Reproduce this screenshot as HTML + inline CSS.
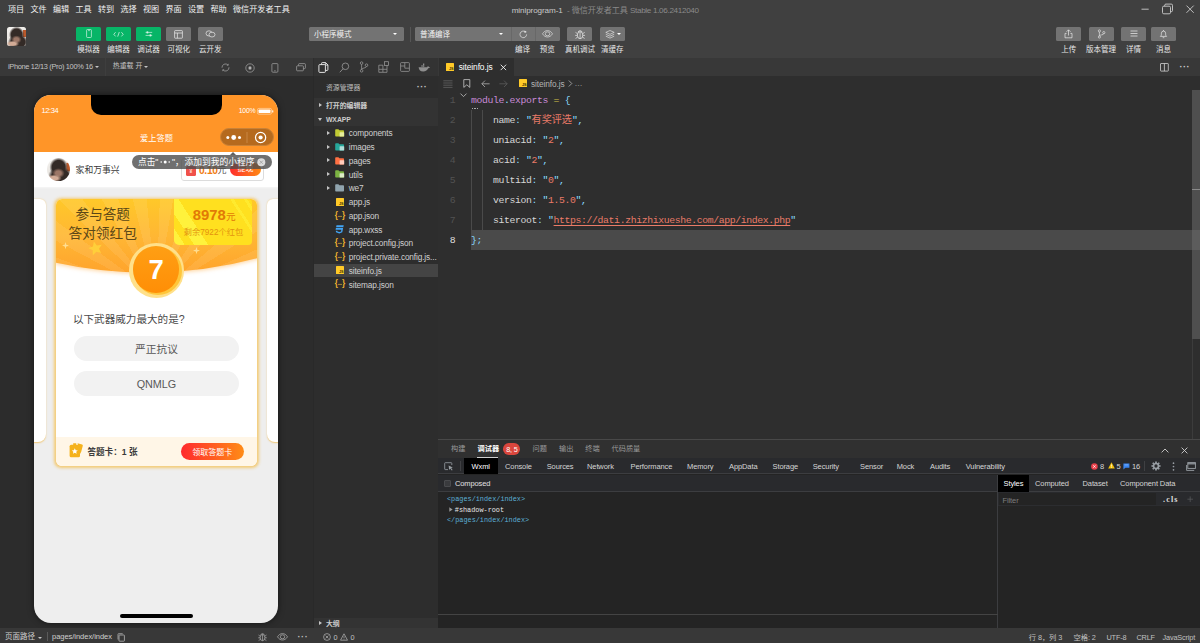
<!DOCTYPE html>
<html lang="zh-CN">
<head>
<meta charset="utf-8">
<title>miniprogram-1 - 微信开发者工具 Stable 1.06.2412040</title>
<style>
*{box-sizing:border-box;margin:0;padding:0}
html,body{width:1200px;height:643px;overflow:hidden;background:#2e2e2e}
body{font-family:"Liberation Sans","Noto Sans CJK SC",sans-serif;font-size:8.125px;color:#ccc;line-height:1}
#app{position:relative;width:1200px;height:643px;overflow:hidden;background:#2e2e2e}
.abs{position:absolute}
.t{position:absolute;white-space:nowrap;line-height:1}
svg{position:absolute;overflow:visible}
/* ---------- top ---------- */
#top{position:absolute;left:0;top:0;width:1200px;height:57.5px;background:#404040}
#menu span{position:absolute;top:6px;font-size:8.125px;color:#f0f0f0;white-space:nowrap}
.tb{position:absolute;top:27px;height:13.75px;width:25px;border-radius:1.5px;background:#737373}
.tb.g{background:#07b567}
.tl{position:absolute;top:45.6px;font-size:7.5px;color:#e8e8e8;white-space:nowrap;transform:translateX(-50%)}
.sel{position:absolute;top:27px;height:13.75px;background:#737373;border-radius:1.5px;color:#f2f2f2;font-size:7.5px;line-height:15.6px;padding-left:5px;white-space:nowrap}
.caret{position:absolute;width:0;height:0;border-left:2.2px solid transparent;border-right:2.2px solid transparent;border-top:2.9px solid #fff}
.ava{position:absolute;left:0;top:0;width:19px;height:19px;background:
radial-gradient(ellipse 6.6px 3.1px at 5.6px 16.8px,#d2ab96 50%,rgba(210,171,150,0) 100%),
radial-gradient(ellipse 5.2px 4.2px at 9.4px 12.6px,#9c7767 45%,rgba(156,119,103,0) 100%),
radial-gradient(ellipse 7.6px 8px at 9.6px 7.6px,#332a26 70%,rgba(51,42,38,0) 100%),
radial-gradient(ellipse 10px 8px at 11px 15px,#332a26 70%,rgba(51,42,38,0) 100%),
linear-gradient(#b9592c,#b9592c) 15.5px 3.5px/3.5px 7px no-repeat,
linear-gradient(160deg,#f5f3f0,#ddd8d2)}
.sel .caret,.tb .caret{border-left-width:2px;border-right-width:2px;border-top-width:2.6px}
.tb svg,.sel svg{opacity:.84}
/* ---------- simulator ---------- */
#simbar{position:absolute;left:0;top:57.5px;width:313px;height:18.75px;background:#383838}
#sim{position:absolute;left:0;top:76.25px;width:313px;height:551.5px;background:#2c2c2c;overflow:hidden}
#simfoot{position:absolute;left:0;top:627.75px;width:313px;height:15.25px;background:#383838}
#phone{position:absolute;left:34.4px;top:18.5px;width:243.75px;height:528.3px;border-radius:17px;background:#eee;overflow:hidden;box-shadow:0 0 6px rgba(0,0,0,.55)}
/* ---------- side ---------- */
#act{position:absolute;left:313.5px;top:57.5px;width:124.5px;height:18.75px;background:#333}
#side{position:absolute;left:313px;top:76.25px;width:125.5px;height:551.5px;background:#2d2d2d;border-left:.8px solid #292929;border-right:.8px solid #292929;padding-left:0}
#side>*{margin-left:-.3px}
.row{position:absolute;left:0;width:124.5px;height:13.75px}
.row .n{position:absolute;left:35px;top:3.3px;font-size:8.3px;color:#d0d0d0;white-space:nowrap;letter-spacing:-.14px}
.arr{position:absolute;width:0;height:0;border-top:2.4px solid transparent;border-bottom:2.4px solid transparent;border-left:3.2px solid #c5c5c5}
.arrd{position:absolute;width:0;height:0;border-left:2.4px solid transparent;border-right:2.4px solid transparent;border-top:3.2px solid #c5c5c5}
/* ---------- editor ---------- */
#tabs{position:absolute;left:438px;top:57.5px;width:762px;height:18.75px;background:#383838}
#ed{position:absolute;left:438px;top:76.25px;width:762px;height:363px;background:#2e2e2e;overflow:hidden}
.ln{position:absolute;left:0;width:17.6px;text-align:right;font-family:"Liberation Mono",monospace;font-size:9.8px;color:#505050;line-height:22.4px;height:20px}
.cl{position:absolute;left:33px;font-family:"Liberation Mono","Noto Sans CJK SC",monospace;font-size:9.8px;letter-spacing:-.375px;line-height:22.4px;height:20px;white-space:pre;color:#d6d6d6}
.p{color:#89ddff}.s{color:#ea7b68}.m{color:#c78ad6}.y{color:#d1c14a}
/* ---------- debugger ---------- */
#dbg{position:absolute;left:438px;top:439.25px;width:762px;height:188.5px;background:#242424;border-top:1px solid #484848}
#status{position:absolute;left:313px;top:627.75px;width:887px;height:15.25px;background:#383838}
</style>
</head>
<body>
<div id="app">

<!-- ================= TOP BAR ================= -->
<div id="top">
  <div id="menu">
    <span style="left:8px">项目</span><span style="left:30.5px">文件</span><span style="left:53px">编辑</span><span style="left:75.5px">工具</span><span style="left:98px">转到</span><span style="left:120.5px">选择</span><span style="left:143px">视图</span><span style="left:165.5px">界面</span><span style="left:188px">设置</span><span style="left:210.5px">帮助</span><span style="left:233px">微信开发者工具</span>
  </div>
  <!--TOP-BEGIN-->
  <!-- avatar -->
  <div class="abs" style="left:7.400px;top:26.800px;width:19px;height:19px;border-radius:2.500px;overflow:hidden"><div class="ava"></div></div>
  <!-- left buttons -->
  <div class="tb g" style="left:76px"><svg style="left:8.5px;top:2.4px" width="8" height="9" viewBox="0 0 8 9"><rect x="1.6" y=".5" width="4.8" height="8" rx=".8" fill="none" stroke="#fff" stroke-width=".7"/><path d="M3 1.6h2" stroke="#fff" stroke-width=".6"/></svg></div>
  <div class="tb g" style="left:106px"><svg style="left:7px;top:3.6px" width="11" height="7" viewBox="0 0 11 7"><path d="M2.6 1.2L.8 3.3l1.8 2.1M8.4 1.2l1.8 2.1-1.8 2.1M6.3 1L4.7 5.6" fill="none" stroke="#fff" stroke-width=".75"/></svg></div>
  <div class="tb g" style="left:136px"><svg style="left:8.5px;top:3.2px" width="8" height="8" viewBox="0 0 8 8"><path d="M.6 2.4h6.6M.6 5.4h6.6" stroke="#fff" stroke-width=".7"/><rect x="1.6" y="1.4" width="1.6" height="2" fill="#fff"/><rect x="4.6" y="4.4" width="1.6" height="2" fill="#fff"/></svg></div>
  <div class="tb" style="left:166.3px"><svg style="left:8px;top:2.6px" width="9" height="9" viewBox="0 0 9 9"><rect x=".6" y=".6" width="7.8" height="7.6" rx=".6" fill="none" stroke="#fff" stroke-width=".75"/><path d="M.6 3h7.8M3.4 3v5.2" stroke="#fff" stroke-width=".75"/></svg></div>
  <div class="tb" style="left:197.8px"><svg style="left:7px;top:3px" width="11" height="8" viewBox="0 0 11 8"><ellipse cx="4" cy="3.4" rx="3" ry="2.6" fill="none" stroke="#fff" stroke-width=".7"/><ellipse cx="7" cy="4.6" rx="3" ry="2.4" fill="#737373" stroke="#fff" stroke-width=".7"/></svg></div>
  <div class="tl" style="left:88.5px">模拟器</div><div class="tl" style="left:118.5px">编辑器</div><div class="tl" style="left:148.5px">调试器</div><div class="tl" style="left:178.8px">可视化</div><div class="tl" style="left:210.3px">云开发</div>
  <!-- selects -->
  <div class="sel" style="left:309px;width:95px">小程序模式<div class="caret" style="left:84.3px;top:6.2px"></div></div>
  <div class="abs" style="left:409.5px;top:26.5px;width:.7px;height:15px;background:#565656"></div>
  <div class="sel" style="left:415px;width:145px">普通编译<div class="caret" style="left:84.2px;top:6.2px"></div>
    <div class="abs" style="left:95.6px;top:0;width:.7px;height:13.75px;background:#686868"></div>
    <div class="abs" style="left:120.3px;top:0;width:.7px;height:13.75px;background:#686868"></div>
    <svg style="left:103.5px;top:2.6px" width="9" height="9" viewBox="0 0 9 9"><path d="M7.6 4.4A3.3 3.3 0 1 1 6.2 1.7" fill="none" stroke="#fff" stroke-width=".7"/><path d="M5.6.4l2.2 1.5-2.3 1z" fill="#fff"/></svg>
    <svg style="left:127px;top:3.2px" width="11" height="8" viewBox="0 0 11 8"><path d="M.5 3.8C2 1.4 3.7.6 5.5.6s3.5.8 5 3.2c-1.5 2.400-3.200 3.200-5 3.200S2 6.200.5 3.800z" fill="none" stroke="#fff" stroke-width=".65"/><ellipse cx="5.500" cy="3.800" rx="2.300" ry="2" fill="none" stroke="#fff" stroke-width=".65"/></svg>
  </div>
  <div class="tb" style="left:567.3px"><svg style="left:6.400px;top:1.500px" width="12.200" height="11" viewBox="0 0 11 10"><ellipse cx="5.500" cy="5.600" rx="2.500" ry="3.200" fill="none" stroke="#fff" stroke-width=".7"/><path d="M5.500 2.600v6.200M3.700 2.800A1.900 1.900 0 0 1 7.300 2.800M3 4.200L1.300 3M8 4.200L9.700 3M3 5.800H1M8 5.800h2M3.200 7.400L1.400 8.600M7.800 7.400l1.800 1.200" fill="none" stroke="#fff" stroke-width=".65"/></svg></div>
  <div class="tb" style="left:600px"><svg style="left:4.500px;top:2.800px" width="10" height="9" viewBox="0 0 10 9"><path d="M5 .5l4.200 1.900L5 4.300.8 2.400zM.8 4.300L5 6.200l4.200-1.900M.8 6.200L5 8.100l4.200-1.900" fill="none" stroke="#fff" stroke-width=".65"/></svg><div class="caret" style="left:17.400px;top:6.200px"></div></div>
  <div class="tl" style="left:522.600px">编译</div><div class="tl" style="left:547.300px">预览</div><div class="tl" style="left:580px">真机调试</div><div class="tl" style="left:612.200px">清缓存</div>
  <!-- title -->
  <div class="t" style="left:511.700px;top:6.600px;font-size:8.125px;color:#c8c8c8;letter-spacing:-.1px">miniprogram-1&nbsp; <span style="color:#8a8a8a">- 微信开发者工具 <span style="letter-spacing:-.32px">Stable 1.06.2412040</span></span></div>
  <!-- window controls -->
  <svg style="left:1141px;top:3.100px" width="56" height="12" viewBox="0 0 56 12"><path d="M.5 6.200h7.200" stroke="#d4d4d4" stroke-width=".85"/><rect x="21.500" y="3.200" width="8" height="7.600" rx="1.300" fill="none" stroke="#d4d4d4" stroke-width=".85"/><path d="M23.700 3.200V2.300a1.200 1.200 0 0 1 1.200-1.200h5.400a1.200 1.200 0 0 1 1.200 1.200v5.200a1.200 1.200 0 0 1-1.200 1.200h-.8" fill="none" stroke="#d4d4d4" stroke-width=".85"/><path d="M45.500 2.600l7.200 7.200M52.700 2.600l-7.200 7.200" stroke="#d4d4d4" stroke-width=".85"/></svg>
  <!-- right buttons -->
  <div class="tb" style="left:1056px"><svg style="left:8px;top:2.200px" width="9" height="10" viewBox="0 0 9 10"><path d="M4.500 6.500V1M2.500 2.800L4.500.8l2 2M2.600 4.400H1v4.400h7V4.400H6.400" fill="none" stroke="#fff" stroke-width=".7"/></svg></div>
  <div class="tb" style="left:1088.500px"><svg style="left:8px;top:2.200px" width="9" height="10" viewBox="0 0 9 10"><circle cx="2.400" cy="1.900" r="1.100" fill="none" stroke="#fff" stroke-width=".65"/><circle cx="2.400" cy="8" r="1.100" fill="none" stroke="#fff" stroke-width=".65"/><circle cx="6.800" cy="3.600" r="1.100" fill="none" stroke="#fff" stroke-width=".65"/><path d="M2.400 3v3.900M6.800 4.700c0 1.400-4.400 1-4.400 2.200" fill="none" stroke="#fff" stroke-width=".65"/></svg></div>
  <div class="tb" style="left:1121px"><svg style="left:8.500px;top:3.400px" width="8" height="7" viewBox="0 0 8 7"><path d="M.5 1h7M.5 3.500h7M.5 6h7" stroke="#fff" stroke-width=".75"/></svg></div>
  <div class="tb" style="left:1151.200px"><svg style="left:8px;top:2.200px" width="9" height="10" viewBox="0 0 9 10"><path d="M1.400 7.400c1-.8 1-1.600 1-3.200a2.100 2.100 0 0 1 4.200 0c0 1.600 0 2.400 1 3.200zM3.700 8.700h1.600M4.500 1.900V1" fill="none" stroke="#fff" stroke-width=".7"/></svg></div>
  <div class="tl" style="left:1068.800px">上传</div><div class="tl" style="left:1101px">版本管理</div><div class="tl" style="left:1133.500px">详情</div><div class="tl" style="left:1163.500px">消息</div>
<!--TOP-END-->
</div>

<!-- ================= SIMULATOR ================= -->
<div id="simbar"><!--SIMBAR-BEGIN-->
  <div class="t" style="left:8px;top:5.600px;font-size:7.400px;color:#c4c4c4;letter-spacing:-.33px">iPhone 12/13 (Pro) 100% 16</div>
  <div class="caret" style="left:94.500px;top:8.600px;border-top-color:#c4c4c4"></div>
  <div class="abs" style="left:104.500px;top:0;width:.7px;height:18.750px;background:#3e3e3e"></div>
  <div class="t" style="left:112.800px;top:5.800px;font-size:6.900px;color:#c4c4c4">热重载 开</div>
  <div class="caret" style="left:143.500px;top:8.600px;border-top-color:#c4c4c4"></div>
  <svg style="left:220.600px;top:5.500px" width="9" height="9" viewBox="0 0 9 9"><path d="M1 4.700A3.500 3.500 0 0 1 7 2M8 4.300A3.500 3.500 0 0 1 2 7" fill="none" stroke="#a6a6a6" stroke-width=".7"/><path d="M7.300.8v1.500H5.800M1.700 8.200V6.700h1.500" fill="none" stroke="#a6a6a6" stroke-width=".6"/></svg>
  <svg style="left:245.400px;top:5.400px" width="10" height="10" viewBox="0 0 10 10"><circle cx="5" cy="5" r="4.200" fill="none" stroke="#a6a6a6" stroke-width=".7"/><rect x="3.600" y="3.600" width="2.800" height="2.800" rx=".4" fill="#b0b0b0"/></svg>
  <svg style="left:271.400px;top:5.200px" width="8" height="10" viewBox="0 0 8 10"><rect x=".9" y=".6" width="6" height="8.600" rx=".9" fill="none" stroke="#a6a6a6" stroke-width=".7"/><path d="M3 7.800h1.800" stroke="#a6a6a6" stroke-width=".6"/></svg>
  <svg style="left:295.500px;top:5.600px" width="10" height="9" viewBox="0 0 10 9"><rect x="2.600" y=".6" width="6.800" height="5" rx=".8" fill="none" stroke="#a6a6a6" stroke-width=".7"/><rect x=".6" y="2.800" width="6.800" height="5" rx=".8" fill="#383838" stroke="#a6a6a6" stroke-width=".7"/></svg>
<!--SIMBAR-END--></div>
<div id="sim">
  <div id="phone"><!--PHONE-BEGIN-->
    <!-- header -->
    <div class="abs" style="left:0;top:0;width:243.750px;height:57.200px;background:#ff9528"></div>
    <div class="abs" style="left:56.200px;top:-10px;width:131.300px;height:30.250px;border-radius:0 0 10px 10px;background:#000"></div>
    <div class="t" style="left:7.100px;top:11.900px;font-size:7.500px;color:#fff;letter-spacing:-.4px">12:34</div>
    <div class="t" style="left:204.300px;top:13.300px;font-size:6.900px;color:#fff;letter-spacing:-.2px">100%</div>
    <svg style="left:223px;top:13px" width="17" height="7" viewBox="0 0 17 7"><rect x=".4" y=".4" width="14.200" height="5.800" rx="1.500" fill="none" stroke="#ffd9ad" stroke-width=".7"/><rect x="1.500" y="1.500" width="12" height="3.600" rx=".8" fill="#fff"/><rect x="15.200" y="2.200" width="1.100" height="2.200" rx=".5" fill="#fff"/></svg>
    <div class="t" style="left:105.700px;top:40.600px;font-size:8.200px;color:#fff">爱上答题</div>
    <!-- capsule -->
    <div class="abs" style="left:185.400px;top:32.750px;width:54px;height:18.800px;border-radius:9.400px;background:#b56a1e;border:.6px solid #c98238"></div>
    <svg style="left:185.400px;top:32.750px" width="54" height="19" viewBox="0 0 54 19"><circle cx="7.800" cy="9.500" r="1.500" fill="#fff"/><circle cx="13.700" cy="9.500" r="2.400" fill="#fff"/><circle cx="19.500" cy="9.500" r="1.500" fill="#fff"/><path d="M27 4v11" stroke="#d69a5c" stroke-width=".6"/><circle cx="40.600" cy="9.500" r="5.100" fill="none" stroke="#fff" stroke-width="1.200"/><circle cx="40.600" cy="9.500" r="2.100" fill="#fff"/></svg>
    <!-- user row -->
    <div class="abs" style="left:0;top:57.200px;width:243.750px;height:35px;background:#fff"></div>
    <div class="abs" style="left:0;top:92.200px;width:243.750px;height:2.500px;background:linear-gradient(#f6f6f6,#eee)"></div>
    <div class="abs" style="left:12.400px;top:63.100px;width:23px;height:23px;border-radius:50%;overflow:hidden"><div class="ava" style="transform:scale(1.2105);transform-origin:0 0"></div></div>
    <div class="t" style="left:41.200px;top:71.100px;font-size:8.800px;color:#3a3a3a">家和万事兴</div>
    <!-- money box -->
    <div class="abs" style="left:146.800px;top:63.600px;width:83.300px;height:23.100px;border:.7px solid #dcdcdc;border-radius:3px;background:#fff"></div>
    <div class="abs" style="left:151.600px;top:71px;width:10.500px;height:10.500px;border-radius:1.500px;background:#f0514a"></div>
    <div class="t" style="left:155px;top:74.500px;font-size:5px;color:#ffd9d0;font-weight:bold">¥</div>
    <div class="t" style="left:164.500px;top:70.800px;font-size:10.300px;color:#f07c14;font-weight:bold;letter-spacing:-.3px">0.10</div>
    <div class="t" style="left:183px;top:71.300px;font-size:9px;color:#555">元</div>
    <div class="abs" style="left:195.600px;top:68.200px;width:31px;height:13.200px;border-radius:6.600px;background:linear-gradient(90deg,#ff2d2d,#ff8a14)"></div>
    <div class="t" style="left:203.200px;top:70.700px;font-size:8px;color:#fff">提现</div>
    <!-- tooltip -->
    <div class="abs" style="left:195.200px;top:57.600px;width:0;height:0;border-left:3px solid transparent;border-right:3px solid transparent;border-bottom:3px solid rgba(80,80,80,.9)"></div>
    <div class="abs" style="left:97.500px;top:60.250px;width:140.200px;height:13.750px;border-radius:6.900px;background:rgba(76,76,76,.8)"></div>
    <div class="t" style="left:103.700px;top:63.200px;font-size:8.600px;color:#fff">点击"</div>
    <svg style="left:124.800px;top:64.400px" width="14" height="6" viewBox="0 0 14 6"><circle cx="2.200" cy="3" r=".8" fill="#fff"/><circle cx="6.200" cy="3" r="1.500" fill="#fff"/><circle cx="10.200" cy="3" r=".8" fill="#fff"/></svg>
    <div class="t" style="left:137.500px;top:63.200px;font-size:8.600px;color:#fff">"，</div>
    <div class="t" style="left:150px;top:63.200px;font-size:8.750px;color:#fff">添加到我的小程序</div>
    <svg style="left:223px;top:63px" width="9" height="9" viewBox="0 0 9 9"><circle cx="4.300" cy="4.200" r="4" fill="#dcdcdc"/><path d="M2.700 2.600l3.200 3.200M5.900 2.600L2.700 5.800" stroke="#9a9a9a" stroke-width=".8"/></svg>
    <!-- side cards -->
    <div class="abs" style="left:-4px;top:104.650px;width:15.200px;height:242.800px;border-radius:0 6px 8px 0;background:#fff;box-shadow:0 .6px 1.500px rgba(240,190,90,.8)"></div>
    <div class="abs" style="left:232.900px;top:104.650px;width:15px;height:242.800px;border-radius:6px 0 0 8px;background:#fff;box-shadow:0 .6px 1.500px rgba(240,190,90,.8)"></div>
    <!-- main card -->
    <div id="card" class="abs" style="left:21.200px;top:104.650px;width:201.300px;height:266.600px;border-radius:6px;background:#fff;box-shadow:0 .5px 3px 1.200px rgba(243,200,110,.95);overflow:hidden">
      <div class="abs" style="left:-2px;top:-4px;width:205.300px;height:84px;filter:drop-shadow(0 1.500px 2px rgba(255,165,50,.5))"><div class="abs" style="left:0;top:0;width:205.300px;height:84px;clip-path:path('M0 0H205.300V62.300Q104 89.600 0 66.800Z');background:repeating-conic-gradient(from -94deg at 50% 118%,rgba(255,255,255,.08) 0 8deg,rgba(255,255,255,0) 8deg 16deg),linear-gradient(#ffc829 5%,#ffb634 50%,#ffa32c 95%)"></div></div>
      <!-- yellow box -->
      <div class="abs" style="left:118.800px;top:0;width:78.100px;height:45.600px;border-radius:0 4px 4px 5px;background:linear-gradient(57deg,#fff23c 0 10%,#ffe01f 10% 18.750%,#fff23c 18.750% 31.700%,#ffe01f 31.700% 79.800%,#ffea2e 79.800% 82.900%,#ffe01f 82.900% 92.200%,#ffea2e 92.200% 95.300%,#ffe01f 95.300%)"></div>
      <div class="t" style="left:137.200px;top:8.400px;font-size:14.900px;font-weight:bold;color:#e27a06;letter-spacing:-.05px">8978</div>
      <div class="t" style="left:170.300px;top:12.800px;font-size:9.600px;color:#e27a06">元</div>
      <div class="t" style="left:128.200px;top:29.700px;font-size:8.200px;color:#e3920f;letter-spacing:.02px">剩余7922个红包</div>
      <div class="t" style="left:20px;top:8.300px;font-size:13.600px;color:#5b4717">参与答题</div>
      <div class="t" style="left:12.900px;top:27.200px;font-size:13.700px;color:#5b4717">答对领红包</div>
      <!-- stars -->
      <svg style="left:6px;top:43px" width="50" height="22" viewBox="0 0 50 22"><path d="M3.500 0l.8 2.800L7 3.600l-2.700.8L3.500 7.200l-.8-2.800L0 3.600l2.700-.8z" fill="#ffe9a8" opacity=".8"/><path transform="translate(33.500 6.200) rotate(-14) scale(1.250) translate(-38 -8.500)" d="M38 3l1.600 3.600 3.900.4-2.900 2.600.8 3.800-3.400-2-3.400 2 .8-3.800-2.900-2.600 3.900-.4z" fill="#ffcf3a"/></svg>
      <svg style="left:137.200px;top:48px" width="8" height="8" viewBox="0 0 8 8"><path d="M3.500 0l.8 2.800L7 3.600l-2.700.8L3.500 7.200l-.8-2.800L0 3.600l2.700-.8z" fill="#ffe9a8" opacity=".8"/></svg>
      <!-- coin -->
      <div class="abs" style="left:73.500px;top:43.700px;width:55.300px;height:54.600px;border-radius:50%;background:#ffe08a"></div>
      <div class="abs" style="left:78px;top:47.600px;width:48px;height:48px;border-radius:50%;background:#ffc63a"></div>
      <div class="abs" style="left:77.300px;top:46.800px;width:46.600px;height:46.600px;border-radius:50%;background:linear-gradient(#ff9f14,#ff8e06)"></div>
      <div class="t" style="left:92.800px;top:57px;font-size:27.500px;font-weight:bold;color:#fff">7</div>
      <!-- question -->
      <div class="t" style="left:17.400px;top:114.200px;font-size:10.600px;color:#4a4a4a;letter-spacing:-.02px">以下武器威力最大的是?</div>
      <div class="abs" style="left:18px;top:136.600px;width:165.800px;height:25.400px;border-radius:12.700px;background:#f2f2f2"></div>
      <div class="abs" style="left:18px;top:171.600px;width:165.800px;height:25.400px;border-radius:12.700px;background:#f2f2f2"></div>
      <div class="t" style="left:18px;width:165.800px;text-align:center;top:144.200px;font-size:10.700px;color:#585858">严正抗议</div>
      <div class="t" style="left:18px;width:165.800px;text-align:center;top:179.300px;font-size:10.800px;color:#585858">QNMLG</div>
      <!-- footer -->
      <div class="abs" style="left:0;top:237.900px;width:201.300px;height:29px;background:#fff6e7"></div>
      <svg style="left:13px;top:243px" width="15" height="16" viewBox="0 0 15 16"><path d="M8.500 1.200l4.600 1.400a1 1 0 0 1 .7 1.200L11.600 12z" fill="#f5b21c"/><rect x=".6" y="2.800" width="10.400" height="12.400" rx="1.500" fill="#f5b21c"/><path d="M4.200 1.200h3v2.200h-3z" fill="#f5b21c"/><path d="M5.800 6.300l.9 1.900 2.100.2-1.600 1.400.5 2-1.900-1.100-1.900 1.100.5-2-1.600-1.400 2.100-.2z" fill="#fff"/></svg>
      <div class="t" style="left:31.800px;top:248.300px;font-size:8.600px;font-weight:bold;color:#3a3a3a">答题卡：1 张</div>
      <div class="abs" style="left:125px;top:243.500px;width:63.300px;height:17.300px;border-radius:8.700px;background:linear-gradient(90deg,#ff2a2e,#ff8c16)"></div>
      <div class="t" style="left:125px;width:63.300px;text-align:center;top:249.200px;font-size:8px;color:#fff">领取答题卡</div>
    </div>
    <!-- home bar -->
    <div class="abs" style="left:85.600px;top:519.300px;width:72.800px;height:3.800px;border-radius:2px;background:#000"></div>
<!--PHONE-END--></div>
</div>
<div id="simfoot"><!--SIMFOOT-BEGIN-->
  <div class="t" style="left:5px;top:5.400px;font-size:7.500px;color:#cfcfcf">页面路径</div>
  <div class="caret" style="left:38px;top:9px;border-top-color:#c4c4c4"></div>
  <div class="abs" style="left:47px;top:4.500px;width:.6px;height:8.500px;background:#5a5a5a"></div>
  <div class="t" style="left:52px;top:5.600px;font-size:7.500px;color:#cfcfcf;letter-spacing:-.03px">pages/index/index</div>
  <svg style="left:117px;top:5px" width="8" height="9" viewBox="0 0 8 9"><rect x="2" y="2" width="5.400" height="6.200" rx=".6" fill="none" stroke="#bdbdbd" stroke-width=".75"/><path d="M1 6.500V1.200a.5.500 0 0 1 .5-.5h4.200" fill="none" stroke="#bdbdbd" stroke-width=".7"/></svg>
  <svg style="left:256.500px;top:4px" width="11" height="10" viewBox="0 0 11 10"><ellipse cx="5.500" cy="5.600" rx="2.400" ry="3.100" fill="none" stroke="#bdbdbd" stroke-width=".65"/><path d="M5.500 2.700v6M3.800 2.800A1.800 1.800 0 0 1 7.200 2.800M3.100 4.200L1.500 3M7.900 4.200L9.500 3M3.100 5.800H1.200M7.900 5.800h1.900M3.300 7.400L1.600 8.600M7.700 7.400l1.700 1.200" fill="none" stroke="#bdbdbd" stroke-width=".6"/></svg>
  <svg style="left:277px;top:5.200px" width="11" height="8" viewBox="0 0 11 8"><path d="M.5 3.800C2 1.400 3.700.6 5.500.6s3.500.8 5 3.200c-1.500 2.400-3.200 3.200-5 3.200S2 6.200.5 3.800z" fill="none" stroke="#bdbdbd" stroke-width=".65"/><ellipse cx="5.500" cy="3.800" rx="2.200" ry="2" fill="none" stroke="#bdbdbd" stroke-width=".65"/></svg>
  <div class="t" style="left:297.500px;top:5px;font-size:9px;font-weight:bold;color:#bdbdbd;letter-spacing:.6px">···</div>
<!--SIMFOOT-END--></div>

<!-- ================= SIDE ================= -->
<div id="act"><!--ACT-BEGIN-->
  <!-- files -->
  <svg style="left:4.500px;top:4px" width="11" height="11" viewBox="0 0 11 11"><path d="M3.600 2.400V1.300a.7.700 0 0 1 .7-.7h3.300l2.300 2.300v4.800a.7.700 0 0 1-.7.700H7.600" fill="none" stroke="#fff" stroke-width=".85"/><path d="M7.400.7v2.400h2.400" fill="none" stroke="#fff" stroke-width=".7"/><rect x=".9" y="2.600" width="6.500" height="7.800" rx=".8" fill="none" stroke="#fff" stroke-width=".85"/></svg>
  <!-- search -->
  <svg style="left:25px;top:4px" width="11" height="11" viewBox="0 0 11 11"><circle cx="6.400" cy="4.300" r="3.300" fill="none" stroke="#9a9a9a" stroke-width=".8"/><path d="M4.100 6.700L.8 10.300" stroke="#9a9a9a" stroke-width=".8"/></svg>
  <!-- git -->
  <svg style="left:45px;top:3.500px" width="10" height="12" viewBox="0 0 10 12"><circle cx="2.600" cy="2.100" r="1.300" fill="none" stroke="#9a9a9a" stroke-width=".75"/><circle cx="2.600" cy="9.800" r="1.300" fill="none" stroke="#9a9a9a" stroke-width=".75"/><circle cx="7.500" cy="4.200" r="1.300" fill="none" stroke="#9a9a9a" stroke-width=".75"/><path d="M2.600 3.400v5.100M7.500 5.500c0 1.800-4.900 1.200-4.900 3" fill="none" stroke="#9a9a9a" stroke-width=".75"/></svg>
  <!-- extensions -->
  <svg style="left:64.500px;top:3.500px" width="12" height="12" viewBox="0 0 12 12"><path d="M.8 4.200h4.100v4.100H.8zM4.900 8.300H9v-4M.8 8.300v3h4.100v-3M4.900 11.300H9v-3" fill="none" stroke="#9a9a9a" stroke-width=".75"/><rect x="6.600" y=".7" width="3.800" height="3.800" fill="none" stroke="#9a9a9a" stroke-width=".75"/></svg>
  <!-- layout -->
  <svg style="left:86px;top:4.500px" width="10" height="10" viewBox="0 0 10 10"><rect x=".6" y=".6" width="8.800" height="8.800" rx=".8" fill="none" stroke="#9a9a9a" stroke-width=".75"/><path d="M.6 4h4.200V.8M4.800 4v2.200h4.600" fill="none" stroke="#9a9a9a" stroke-width=".75"/></svg>
  <!-- docker -->
  <svg style="left:104px;top:5px" width="12" height="9" viewBox="0 0 12 9"><path d="M.6 4.200h8.200c.5-.1.900-.5 1-1.300.7.300 1 .7 1.100 1.200.4-.1.800 0 1 .2-.3.700-.9 1-1.700 1C9.500 7.300 7.800 8.400 5.200 8.400 2.400 8.400.9 7 .6 4.200z" fill="#8e8e8e"/><path d="M3.400 2.200h1.300v1.500H3.400zM5 2.200h1.300v1.500H5zM5 .6h1.300v1.400H5z" fill="#8e8e8e"/></svg>
<!--ACT-END--></div>
<div id="side"><!--SIDE-BEGIN-->
  <div class="t" style="left:12.200px;top:8.500px;font-size:6.900px;color:#bbb;letter-spacing:.02px">资源管理器</div>
  <div class="t" style="left:103px;top:6.800px;font-size:9px;font-weight:bold;color:#c5c5c5;letter-spacing:.5px">···</div>
  <div class="row" style="top:22.00px;background:#333"><div class="arr" style="left:5.200px;top:4.800px"></div><div class="t" style="left:12.200px;top:4.500px;font-size:6.900px;font-weight:bold;color:#ccc">打开的编辑器</div></div>
  <div class="row" style="top:35.75px;background:#333"><div class="arrd" style="left:4.600px;top:5.600px"></div><div class="t" style="left:12.200px;top:4.500px;font-size:6.900px;font-weight:bold;color:#ccc;letter-spacing:-.05px">WXAPP</div></div>
  <div class="row" style="top:49.75px"><div class="arr" style="left:13.500px;top:4.800px"></div><svg style="left:21.600px;top:3px" width="10" height="8" viewBox="0 0 10 8"><path d="M.2 1A.8.800 0 0 1 1 .2h2.400l1 1h3.800a.8.800 0 0 1 .8.800v4.800a.8.800 0 0 1-.8.800H1a.8.800 0 0 1-.8-.8z" fill="#c0ca33"/><rect x="4.600" y="3.200" width="4.600" height="4.400" rx=".6" fill="#e6ee9c"/></svg><div class="n">components</div></div>
  <div class="row" style="top:63.50px"><div class="arr" style="left:13.500px;top:4.800px"></div><svg style="left:21.600px;top:3px" width="10" height="8" viewBox="0 0 10 8"><path d="M.2 1A.8.800 0 0 1 1 .2h2.400l1 1h3.800a.8.800 0 0 1 .8.800v4.800a.8.800 0 0 1-.8.800H1a.8.800 0 0 1-.8-.8z" fill="#26a69a"/><rect x="4.600" y="3.200" width="4.600" height="4.400" rx=".6" fill="#b2dfdb"/></svg><div class="n">images</div></div>
  <div class="row" style="top:77.25px"><div class="arr" style="left:13.500px;top:4.800px"></div><svg style="left:21.600px;top:3px" width="10" height="8" viewBox="0 0 10 8"><path d="M.2 1A.8.800 0 0 1 1 .2h2.400l1 1h3.800a.8.800 0 0 1 .8.800v4.800a.8.800 0 0 1-.8.800H1a.8.800 0 0 1-.8-.8z" fill="#ff7043"/><rect x="4.600" y="3.200" width="4.600" height="4.400" rx=".6" fill="#ffccbc"/></svg><div class="n">pages</div></div>
  <div class="row" style="top:91.00px"><div class="arr" style="left:13.500px;top:4.800px"></div><svg style="left:21.600px;top:3px" width="10" height="8" viewBox="0 0 10 8"><path d="M.2 1A.8.800 0 0 1 1 .2h2.400l1 1h3.800a.8.800 0 0 1 .8.800v4.800a.8.800 0 0 1-.8.800H1a.8.800 0 0 1-.8-.8z" fill="#7cb342"/><rect x="4.600" y="3.200" width="4.600" height="4.400" rx=".6" fill="#dcedc8"/></svg><div class="n">utils</div></div>
  <div class="row" style="top:104.75px"><div class="arr" style="left:13.500px;top:4.800px"></div><svg style="left:21.600px;top:3px" width="10" height="8" viewBox="0 0 10 8"><path d="M.2 1A.8.800 0 0 1 1 .2h2.400l1 1h3.800a.8.800 0 0 1 .8.800v4.800a.8.800 0 0 1-.8.800H1a.8.800 0 0 1-.8-.8z" fill="#90a4ae"/></svg><div class="n">we7</div></div>
  <div class="row" style="top:118.50px"><svg style="left:22.600px;top:2.800px" width="8" height="8" viewBox="0 0 8 8"><rect width="8" height="8" rx=".5" fill="#ffca28"/><text x="3" y="7" font-size="3.800" font-weight="bold" font-family="Liberation Sans,sans-serif" fill="#3a3000">JS</text></svg><div class="n">app.js</div></div>
  <div class="row" style="top:132.25px"><svg style="left:21.400px;top:1.200px" width="10" height="10" viewBox="0 0 10 10"><text x="-.2" y="7.800" font-size="8.200" font-weight="bold" font-family="Liberation Sans,sans-serif" fill="#f2b530">{</text><text x="6.900" y="7.800" font-size="8.200" font-weight="bold" font-family="Liberation Sans,sans-serif" fill="#f2b530">}</text><circle cx="4" cy="6.400" r=".65" fill="#f2b530"/><circle cx="6" cy="6.400" r=".65" fill="#f2b530"/></svg><div class="n">app.json</div></div>
  <div class="row" style="top:146.00px"><svg style="left:21.600px;top:2.500px" width="9" height="9" viewBox="0 0 9 9"><path d="M1.500.3h7.200l-.4 1.900H1.100zM.9 3h7.200L7.300 7.300 4.300 8.400 1 7.300.8 5.800h1.600l.1.600 1.800.6 1.800-.6.200-1.600H.6z" fill="#42a5f5"/></svg><div class="n">app.wxss</div></div>
  <div class="row" style="top:159.75px"><svg style="left:21.400px;top:1.200px" width="10" height="10" viewBox="0 0 10 10"><text x="-.2" y="7.800" font-size="8.200" font-weight="bold" font-family="Liberation Sans,sans-serif" fill="#f2b530">{</text><text x="6.900" y="7.800" font-size="8.200" font-weight="bold" font-family="Liberation Sans,sans-serif" fill="#f2b530">}</text><circle cx="4" cy="6.400" r=".65" fill="#f2b530"/><circle cx="6" cy="6.400" r=".65" fill="#f2b530"/></svg><div class="n">project.config.json</div></div>
  <div class="row" style="top:173.50px"><svg style="left:21.400px;top:1.200px" width="10" height="10" viewBox="0 0 10 10"><text x="-.2" y="7.800" font-size="8.200" font-weight="bold" font-family="Liberation Sans,sans-serif" fill="#f2b530">{</text><text x="6.900" y="7.800" font-size="8.200" font-weight="bold" font-family="Liberation Sans,sans-serif" fill="#f2b530">}</text><circle cx="4" cy="6.400" r=".65" fill="#f2b530"/><circle cx="6" cy="6.400" r=".65" fill="#f2b530"/></svg><div class="n">project.private.config.js...</div></div>
  <div class="row" style="top:187.25px;background:#444"><svg style="left:22.600px;top:2.800px" width="8" height="8" viewBox="0 0 8 8"><rect width="8" height="8" rx=".5" fill="#ffca28"/><text x="3" y="7" font-size="3.800" font-weight="bold" font-family="Liberation Sans,sans-serif" fill="#3a3000">JS</text></svg><div class="n">siteinfo.js</div></div>
  <div class="row" style="top:201.00px"><svg style="left:21.400px;top:1.200px" width="10" height="10" viewBox="0 0 10 10"><text x="-.2" y="7.800" font-size="8.200" font-weight="bold" font-family="Liberation Sans,sans-serif" fill="#f2b530">{</text><text x="6.900" y="7.800" font-size="8.200" font-weight="bold" font-family="Liberation Sans,sans-serif" fill="#f2b530">}</text><circle cx="4" cy="6.400" r=".65" fill="#f2b530"/><circle cx="6" cy="6.400" r=".65" fill="#f2b530"/></svg><div class="n">sitemap.json</div></div>
  <div class="abs" style="left:0;top:541.500px;width:124.500px;height:10px;background:#333"></div>
  <div class="arr" style="left:5.200px;top:545px"></div><div class="t" style="left:12.200px;top:544.800px;font-size:6.900px;font-weight:bold;color:#ccc">大纲</div>
<!--SIDE-END--></div>

<!-- ================= EDITOR ================= -->
<div id="tabs"><!--TABS-BEGIN-->
  <div class="abs" style="left:1px;top:0;width:75px;height:18.750px;background:#2e2e2e"></div>
  <svg style="left:8px;top:5.800px" width="8" height="8" viewBox="0 0 8 8"><rect width="8" height="8" rx=".5" fill="#ffca28"/><text x="3" y="7" font-size="3.800" font-weight="bold" font-family="Liberation Sans,sans-serif" fill="#3a3000">JS</text></svg>
  <div class="t" style="left:20.700px;top:5.900px;font-size:8.400px;color:#fff;letter-spacing:-.1px">siteinfo.js</div>
  <svg style="left:62px;top:6.600px" width="7" height="7" viewBox="0 0 7 7"><path d="M.7.700l5.400 5.400M6.100.7L.7 6.100" stroke="#fff" stroke-width=".85"/></svg>
  <svg style="left:722px;top:5.400px" width="9" height="9" viewBox="0 0 9 9"><rect x=".5" y=".5" width="7.800" height="7.600" rx=".5" fill="none" stroke="#d0d0d0" stroke-width=".8"/><path d="M4.400.5v7.600" stroke="#d0d0d0" stroke-width=".8"/></svg>
  <div class="t" style="left:741.500px;top:5.400px;font-size:9px;font-weight:bold;color:#d0d0d0;letter-spacing:.5px">···</div>
<!--TABS-END--></div>
<div id="ed"><!--ED-BEGIN-->
  <svg style="left:5px;top:3.400px" width="10" height="8" viewBox="0 0 10 8"><path d="M.3 .8h9.200M.3 3h9.200M.3 5.200h9.200M.3 7.400h9.200" stroke="#7a7a7a" stroke-width=".55"/></svg>
  <svg style="left:25px;top:2.600px" width="8" height="9" viewBox="0 0 8 9"><path d="M.8.600h6v7.800l-3-2.600-3 2.600z" fill="none" stroke="#c0c0c0" stroke-width=".85"/></svg>
  <svg style="left:43px;top:3.400px" width="9" height="8" viewBox="0 0 9 8"><path d="M8.600 3.800H.8M4 .6L.8 3.800 4 7" fill="none" stroke="#b0b0b0" stroke-width=".8"/></svg>
  <svg style="left:61px;top:3.400px" width="9" height="8" viewBox="0 0 9 8"><path d="M.4 3.800h7.800M5 .6l3.200 3.200L5 7" fill="none" stroke="#5c5c5c" stroke-width=".8"/></svg>
  <svg style="left:80.500px;top:3.200px" width="8" height="8" viewBox="0 0 8 8"><rect width="8" height="8" rx=".5" fill="#ffca28"/><text x="3" y="7" font-size="3.800" font-weight="bold" font-family="Liberation Sans,sans-serif" fill="#3a3000">JS</text></svg>
  <div class="t" style="left:93px;top:3.600px;font-size:8.300px;color:#b4b4b4;letter-spacing:-.1px">siteinfo.js</div>
  <svg style="left:129.500px;top:4.200px" width="5" height="7" viewBox="0 0 5 7"><path d="M.8.500l3 3-3 3" fill="none" stroke="#b4b4b4" stroke-width=".8"/></svg>
  <div class="t" style="left:136.500px;top:3.600px;font-size:8px;color:#b4b4b4">…</div>
  <div class="abs" style="left:33.300px;top:153.75px;width:729px;height:20px;background:#4a4a4a"></div>
  <div class="abs" style="left:33.200px;top:33.75px;width:.7px;height:120px;background:#4a4a4a"></div>
  <div class="abs" style="left:44.200px;top:33.75px;width:.7px;height:120px;background:#4a4a4a"></div>
  <div class="ln" style="top:13.75px;color:#525252">1</div><div class="cl" style="top:13.75px"><span class="m">module</span><span class="p">.</span><span class="m">exports</span> <span class="y">=</span> <span class="p">{</span></div>
  <div class="ln" style="top:33.75px;color:#525252">2</div><div class="cl" style="top:33.75px">    name<span class="p">: "</span><span class="s" style="font-size:10.100px;letter-spacing:0">有奖评选</span><span class="p">",</span></div>
  <div class="ln" style="top:53.75px;color:#525252">3</div><div class="cl" style="top:53.75px">    uniacid<span class="p">: "</span><span class="s">2</span><span class="p">",</span></div>
  <div class="ln" style="top:73.75px;color:#525252">4</div><div class="cl" style="top:73.75px">    acid<span class="p">: "</span><span class="s">2</span><span class="p">",</span></div>
  <div class="ln" style="top:93.75px;color:#525252">5</div><div class="cl" style="top:93.75px">    multiid<span class="p">: "</span><span class="s">0</span><span class="p">",</span></div>
  <div class="ln" style="top:113.75px;color:#525252">6</div><div class="cl" style="top:113.75px">    version<span class="p">: "</span><span class="s">1.5.0</span><span class="p">",</span></div>
  <div class="ln" style="top:133.75px;color:#525252">7</div><div class="cl" style="top:133.75px">    siteroot<span class="p">: "</span><span class="s" style="text-decoration:underline;text-underline-offset:2px;text-decoration-thickness:.7px">https://dati.zhizhixueshe.com/app/index.php</span><span class="p">"</span></div>
  <div class="ln" style="top:153.75px;color:#e0e0e0">8</div><div class="cl" style="top:153.75px"><span class="p">};</span></div>
  <svg style="left:21.500px;top:16.800px" width="7" height="5" viewBox="0 0 7 5"><path d="M.5.600l3 3 3-3" fill="none" stroke="#c0c0c0" stroke-width=".8"/></svg>
  <div class="abs" style="left:33.500px;top:32.200px;width:6px;height:1px;background:repeating-linear-gradient(90deg,#aaa 0 1.200px,transparent 1.200px 2.400px)"></div>
  <div class="abs" style="left:754px;top:13.750px;width:.7px;height:349px;background:#3c3c3c"></div>
  <div class="abs" style="left:754px;top:13.750px;width:8px;height:248.800px;background:#4f4f4f"></div>
  <div class="abs" style="left:754px;top:153.75px;width:8px;height:20px;background:#5c5c5c"></div>
  <div class="abs" style="left:754px;top:112.500px;width:8px;height:.8px;background:#8a8a8a"></div>
<!--ED-END--></div>

<!-- ================= DEBUGGER ================= -->
<div id="dbg"><!--DBG-BEGIN-->
  <div class="abs" style="left:0;top:0;width:762px;height:17.75px;background:#303030"></div>
  <div class="t" style="left:13.00px;top:4.95px;font-size:7.2px;color:#9a9a9a;">构建</div>
  <div class="t" style="left:39.50px;top:4.95px;font-size:7.2px;color:#fff;font-weight:bold">调试器</div>
  <div class="abs" style="left:39.30px;top:16.55px;width:21px;height:.8px;background:#d0d0d0"></div>
  <div class="abs" style="left:65.00px;top:3.15px;width:17.200px;height:11.600px;border-radius:5.800px;background:#d9463d"></div>
  <div class="t" style="left:68.20px;top:5.35px;font-size:7.2px;color:#fff;letter-spacing:-.15px">8, 5</div>
  <div class="t" style="left:94.50px;top:4.95px;font-size:7.2px;color:#9a9a9a;">问题</div>
  <div class="t" style="left:121.00px;top:4.95px;font-size:7.2px;color:#9a9a9a;">输出</div>
  <div class="t" style="left:147.30px;top:4.95px;font-size:7.2px;color:#9a9a9a;">终端</div>
  <div class="t" style="left:173.50px;top:4.95px;font-size:7.2px;color:#9a9a9a;">代码质量</div>
  <svg style="left:722.50px;top:7.25px" width="8" height="5" viewBox="0 0 8 5"><path d="M.6 4.400L4 1l3.400 3.400" fill="none" stroke="#d0d0d0" stroke-width=".9"/></svg>
  <svg style="left:743.00px;top:6.35px" width="7" height="7" viewBox="0 0 7 7"><path d="M.6.600l5.800 5.800M6.400.6L.6 6.400" stroke="#d0d0d0" stroke-width=".9"/></svg>
  <div class="abs" style="left:0;top:17.75px;width:762px;height:16.300px;background:#292a2d;border-bottom:.7px solid #3c3d40"></div>
  <svg style="left:6.00px;top:21.25px" width="10" height="9" viewBox="0 0 10 9"><path d="M4 7.600H1.300a.6.600 0 0 1-.6-.6V1.300a.6.600 0 0 1 .6-.6h5.900a.6.600 0 0 1 .6.600V3" fill="none" stroke="#9aa0a6" stroke-width=".8"/><path d="M4.600 3.600l4.200 1.800-1.700.6 1.500 2-.8.600-1.500-2-1.100 1.300z" fill="#9aa0a6"/></svg>
  <div class="abs" style="left:22.00px;top:20.75px;width:.6px;height:10px;background:#3f4043"></div>
  <div class="abs" style="left:26.00px;top:17.75px;width:34px;height:16.300px;background:#000"></div>
  <div class="t" style="left:33.50px;top:22.35px;font-size:7.5px;color:#fff;letter-spacing:-.1px">Wxml</div>
  <div class="t" style="left:67.00px;top:22.35px;font-size:7.5px;color:#d5d5d5;letter-spacing:-.1px">Console</div>
  <div class="t" style="left:108.70px;top:22.35px;font-size:7.5px;color:#d5d5d5;letter-spacing:-.1px">Sources</div>
  <div class="t" style="left:149.00px;top:22.35px;font-size:7.5px;color:#d5d5d5;letter-spacing:-.1px">Network</div>
  <div class="t" style="left:192.50px;top:22.35px;font-size:7.5px;color:#d5d5d5;letter-spacing:-.1px">Performance</div>
  <div class="t" style="left:249.00px;top:22.35px;font-size:7.5px;color:#d5d5d5;letter-spacing:-.1px">Memory</div>
  <div class="t" style="left:291.00px;top:22.35px;font-size:7.5px;color:#d5d5d5;letter-spacing:-.1px">AppData</div>
  <div class="t" style="left:334.50px;top:22.35px;font-size:7.5px;color:#d5d5d5;letter-spacing:-.1px">Storage</div>
  <div class="t" style="left:374.70px;top:22.35px;font-size:7.5px;color:#d5d5d5;letter-spacing:-.1px">Security</div>
  <div class="t" style="left:422.00px;top:22.35px;font-size:7.5px;color:#d5d5d5;letter-spacing:-.1px">Sensor</div>
  <div class="t" style="left:458.70px;top:22.35px;font-size:7.5px;color:#d5d5d5;letter-spacing:-.1px">Mock</div>
  <div class="t" style="left:492.00px;top:22.35px;font-size:7.5px;color:#d5d5d5;letter-spacing:-.1px">Audits</div>
  <div class="t" style="left:527.70px;top:22.35px;font-size:7.5px;color:#d5d5d5;letter-spacing:-.1px">Vulnerability</div>
  <svg style="left:653.00px;top:22.25px" width="7" height="7" viewBox="0 0 7 7"><circle cx="3.400" cy="3.500" r="3.300" fill="#e8404a"/><path d="M2.200 2.300l2.400 2.400M4.600 2.300L2.200 4.700" stroke="#fff" stroke-width=".8"/></svg>
  <div class="t" style="left:662.00px;top:22.35px;font-size:7.5px;color:#d5d5d5;">8</div>
  <svg style="left:669.80px;top:22.05px" width="7" height="7" viewBox="0 0 7 7"><path d="M3.500.3l3.300 6.200H.2z" fill="#f4c20d"/><path d="M3.500 2.400v2.200M3.500 5.200v.7" stroke="#fff" stroke-width=".7"/></svg>
  <div class="t" style="left:678.50px;top:22.35px;font-size:7.5px;color:#d5d5d5;">5</div>
  <svg style="left:684.80px;top:22.55px" width="7" height="7" viewBox="0 0 7 7"><path d="M.4.400h6v4.400h-4L.4 6.400z" fill="#3b86f0"/><path d="M1.600 1.900h3.600" stroke="#9cc4ff" stroke-width=".6"/></svg>
  <div class="t" style="left:694.00px;top:22.35px;font-size:7.5px;color:#d5d5d5;letter-spacing:-.2px">16</div>
  <div class="abs" style="left:706.00px;top:20.75px;width:.6px;height:10px;background:#3f4043"></div>
  <svg style="left:712.80px;top:21.15px" width="10" height="10" viewBox="0 0 10 10"><circle cx="5" cy="5" r="2.500" fill="none" stroke="#9aa0a6" stroke-width="1.700"/><g stroke="#9aa0a6" stroke-width="1.700"><path d="M5 .4v1.600M5 8v1.600M.4 5H2M8 5h1.600M1.750 1.750l1.100 1.100M7.150 7.150l1.100 1.100M8.250 1.750l-1.100 1.100M2.850 7.150l-1.100 1.100"/></g></svg>
  <svg style="left:733.80px;top:21.55px" width="3" height="9" viewBox="0 0 3 9"><circle cx="1.500" cy="1.200" r=".85" fill="#9aa0a6"/><circle cx="1.500" cy="4.500" r=".85" fill="#9aa0a6"/><circle cx="1.500" cy="7.800" r=".85" fill="#9aa0a6"/></svg>
  <svg style="left:747.30px;top:21.35px" width="11" height="10" viewBox="0 0 11 10"><rect x="2.800" y=".6" width="7.600" height="5.800" fill="none" stroke="#9aa0a6" stroke-width=".9"/><path d="M2.800 1.800h7.600" stroke="#9aa0a6" stroke-width="1.200"/><path d="M1.600 3v5.400h7.600" fill="none" stroke="#9aa0a6" stroke-width=".9"/></svg>
  <div class="abs" style="left:0;top:34.45px;width:559.500px;height:16.900px;background:#292a2d;border-bottom:.7px solid #3c3d40"></div>
  <div class="abs" style="left:5.50px;top:39.25px;width:7px;height:7px;border-radius:1px;background:#3a3b3e;border:.6px solid #4a4b4e"></div>
  <div class="t" style="left:17.00px;top:39.35px;font-size:7.5px;color:#e0e0e0;letter-spacing:-.12px">Composed</div>
  <div class="t" style="left:9.00px;top:55.65px;font-family:'Liberation Mono',monospace;font-size:6.850px;color:#5db0d7">&lt;pages/index/index&gt;</div>
  <svg style="left:11.200px;top:66.400px" width="4" height="5" viewBox="0 0 4 5"><path d="M.3.300L3.600 2.500.3 4.700z" fill="#9a9a9a"/></svg>
  <div class="t" style="left:16.80px;top:66.45px;font-family:'Liberation Mono',monospace;font-size:6.850px;color:#e8e8e8">#shadow-root</div>
  <div class="t" style="left:9.00px;top:77.05px;font-family:'Liberation Mono',monospace;font-size:6.850px;color:#5db0d7">&lt;/pages/index/index&gt;</div>
  <div class="abs" style="left:559.30px;top:34.45px;width:.8px;height:153px;background:#3c3d40"></div>
  <div class="abs" style="left:560.00px;top:34.45px;width:202px;height:16.900px;background:#292a2d;border-bottom:.7px solid #3c3d40"></div>
  <div class="abs" style="left:560.00px;top:34.45px;width:31px;height:16.900px;background:#000"></div>
  <div class="t" style="left:565.50px;top:39.35px;font-size:7.5px;color:#fff;letter-spacing:-.1px">Styles</div>
  <div class="t" style="left:597.00px;top:39.35px;font-size:7.5px;color:#d5d5d5;letter-spacing:-.1px">Computed</div>
  <div class="t" style="left:644.50px;top:39.35px;font-size:7.5px;color:#d5d5d5;letter-spacing:-.1px">Dataset</div>
  <div class="t" style="left:682.00px;top:39.35px;font-size:7.5px;color:#d5d5d5;letter-spacing:-.1px">Component Data</div>
  <div class="abs" style="left:560.00px;top:51.35px;width:202px;height:14.700px;background:#292a2d;border-bottom:.7px solid #2c2d30"></div>
  <div class="abs" style="left:561.00px;top:52.75px;width:157px;height:12px;background:#242424"></div>
  <div class="t" style="left:564.50px;top:56.55px;font-size:7.5px;color:#7d7d7d;letter-spacing:-.1px">Filter</div>
  <div class="t" style="left:725.00px;top:56.05px;font-family:'Liberation Serif',serif;font-weight:bold;font-size:8.200px;color:#ddd;letter-spacing:1.100px">.cls</div>
  <svg style="left:749.00px;top:55.75px" width="7" height="7" viewBox="0 0 7 7"><path d="M3.200.4v5.600M.4 3.200H6" stroke="#5a5b5e" stroke-width=".7"/></svg>
  <div class="abs" style="left:0;top:173.25px;width:559.500px;height:.8px;background:#444"></div>
<!--DBG-END--></div>
<div id="status"><!--STATUS-BEGIN-->
  <svg style="left:10.00px;top:5.600px" width="8" height="8" viewBox="0 0 8 8"><circle cx="4" cy="4" r="3.400" fill="none" stroke="#c0c0c0" stroke-width=".65"/><path d="M2.600 2.600l2.800 2.800M5.400 2.600L2.600 5.400" stroke="#c0c0c0" stroke-width=".65"/></svg>
  <div class="t" style="left:20.50px;top:6.200px;font-size:7.300px;color:#c0c0c0;">0</div>
  <svg style="left:27.00px;top:5.400px" width="8" height="8" viewBox="0 0 8 8"><path d="M4 .8l3.500 6.400H.5z" fill="none" stroke="#c0c0c0" stroke-width=".65"/><path d="M4 3.200v2M4 5.800v.6" stroke="#c0c0c0" stroke-width=".6"/></svg>
  <div class="t" style="left:37.50px;top:6.200px;font-size:7.300px;color:#c0c0c0;">0</div>
  <div class="t" style="left:715.80px;top:6.200px;font-size:7.300px;color:#c0c0c0;letter-spacing:-.1px">行 8，列 3</div>
  <div class="t" style="left:760.50px;top:6.200px;font-size:7.300px;color:#c0c0c0;letter-spacing:-.1px">空格: 2</div>
  <div class="t" style="left:793.50px;top:6.200px;font-size:7.300px;color:#c0c0c0;letter-spacing:-.15px">UTF-8</div>
  <div class="t" style="left:823.50px;top:6.200px;font-size:7.300px;color:#c0c0c0;letter-spacing:-.2px">CRLF</div>
  <div class="t" style="left:849.50px;top:6.200px;font-size:7.300px;color:#c0c0c0;letter-spacing:-.15px">JavaScript</div>
<!--STATUS-END--></div>

</div>
</body>
</html>
